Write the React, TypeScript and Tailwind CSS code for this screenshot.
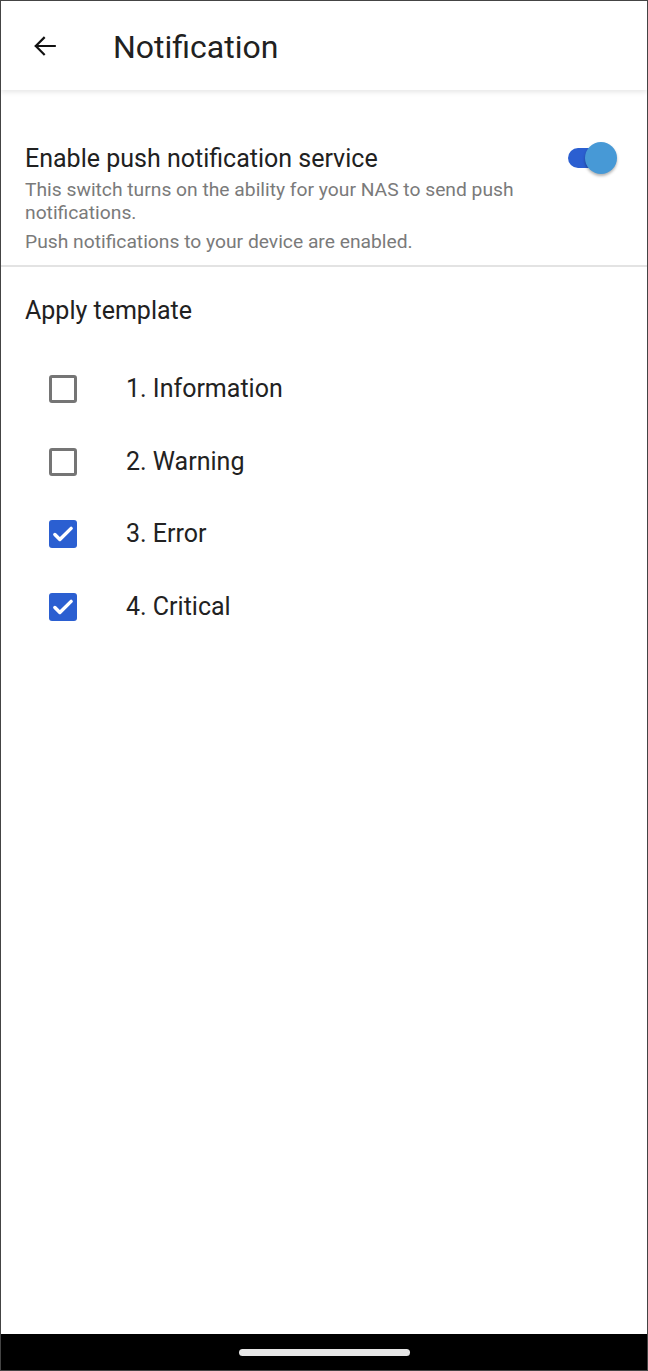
import React from 'react';

const items = [
  { label: '1. Information', checked: false },
  { label: '2. Warning', checked: false },
  { label: '3. Error', checked: true },
  { label: '4. Critical', checked: true },
];

const Checkbox: React.FC<{ checked: boolean }> = ({ checked }) =>
  checked ? (
    <div className="w-[28px] h-[28px] rounded-[3px] bg-[#2b5fd1] flex items-center justify-center">
      <svg width="26" height="26" viewBox="0 0 24 24" fill="none">
        <path d="M4.5 12.5l4.6 4.6L19.5 6.8" stroke="white" strokeWidth="3.2" strokeLinecap="round" strokeLinejoin="round" />
      </svg>
    </div>
  ) : (
    <div className="w-[28px] h-[28px] rounded-[3px] border-[3px] border-[#757575]" />
  );

export default function App() {
  return (
    <div className="w-[648px] h-[1371px] border border-[#444] bg-white flex flex-col font-['Roboto',sans-serif] text-[#212121] overflow-hidden">
      <header className="h-[89px] shrink-0 flex items-center bg-white shadow-[0_2px_5px_rgba(0,0,0,0.10)] relative z-10">
        <div className="w-[112px] pl-[31px] flex items-center">
          <svg width="26" height="26" viewBox="0 0 24 24" fill="none">
            <path d="M21 12H3.5M11 4.5L3.5 12l7.5 7.5" stroke="#111" strokeWidth="2" strokeLinecap="square" />
          </svg>
        </div>
        <h1 className="text-[32px] leading-[36px] font-normal mt-[2px]">Notification</h1>
      </header>

      <section className="pl-[24px] pr-[30px] pt-[55px] pb-[12px] border-b-2 border-[#e3e3e3] flex">
        <div className="flex-1">
          <div className="text-[25px] leading-[28px]">Enable push notification service</div>
          <p className="mt-[5px] text-[19.25px] leading-[23px] text-[#7a7a7a] pr-[40px]">
            This switch turns on the ability for your NAS to send push notifications.
          </p>
          <p className="mt-[6px] text-[19.25px] leading-[23px] text-[#7a7a7a]">
            Push notifications to your device are enabled.
          </p>
        </div>
        <div className="relative w-[50px] h-[32px] mt-[-3px] shrink-0 ml-[4px] mr-[-3px]">
          <div className="absolute left-[-2px] top-[6px] w-[36px] h-[20px] rounded-full bg-[#2b5fd1]" />
          <div className="absolute left-[15px] top-0 w-[32px] h-[32px] rounded-full bg-[#4799d6] shadow-[0_2px_3px_rgba(0,0,0,0.3)]" />
        </div>
      </section>

      <section className="pl-[24px] pt-[30px]">
        <div className="text-[25px] leading-[28px]">Apply template</div>
        <div className="mt-[28px]">
          {items.map((it) => (
            <div key={it.label} className="h-[72.5px] flex items-center">
              <div className="w-[101px] pl-[24px]">
                <Checkbox checked={it.checked} />
              </div>
              <span className="text-[25px] leading-[28px] text-[#222]">{it.label}</span>
            </div>
          ))}
        </div>
      </section>

      <div className="flex-1" />
      <div className="h-[36px] shrink-0 bg-black flex items-center justify-center">
        <div className="w-[171px] h-[7px] rounded-full bg-[#e6e6e6]" />
      </div>
    </div>
  );
}
